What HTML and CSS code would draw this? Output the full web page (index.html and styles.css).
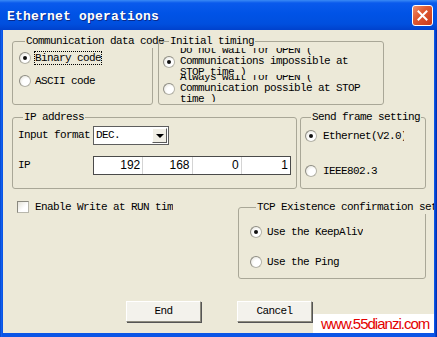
FILE: index.html
```html
<!DOCTYPE html>
<html>
    <head>
        <title>Ethernet operations</title>
        <link rel="stylesheet" href="styles.css">
    </head>
    <body>
        <div class="window">
            <div class="titlebar">
                <span class="title">Ethernet operations</span>
                <span class="close">
                    <svg width="11" height="11" viewBox="0 0 11 11"><path d="M1.5 1.5 L9.5 9.5 M9.5 1.5 L1.5 9.5" stroke="#fff" stroke-width="2" stroke-linecap="square"/></svg>
                </span>
            </div>
            <div class="client">
                <div class="row row-top">
                    <div class="group g-code">
                        <div class="legend">Communication data code</div>
                        <div class="opt opt-binary"><span class="radio on"></span><span class="focus">Binary code</span></div>
                        <div class="opt opt-ascii"><span class="radio"></span><span>ASCII code</span></div>
                    </div>
                    <div class="group g-timing">
                        <div class="legend">Initial timing</div>
                        <div class="opt tall"><span class="radio on"></span><span class="wrap">Do not wait for OPEN (<br>Communications impossible at<br>STOP time )</span></div>
                        <div class="opt tall"><span class="radio"></span><span class="wrap">Always wait for OPEN (<br>Communication possible at STOP<br>time )</span></div>
                    </div>
                </div>
                <div class="row row-mid">
                    <div class="group g-ip">
                        <div class="legend">IP address</div>
                        <div class="field-row fmt-row">
                            <span class="field-label">Input format</span>
                            <div class="select">
                                <span>DEC.</span>
                                <span class="arrow"><span class="tri"></span></span>
                            </div>
                        </div>
                        <div class="field-row ip-row">
                            <span class="field-label">IP</span>
                            <div class="ipbox">
                                <span class="seg">192</span>
                                <span class="seg">168</span>
                                <span class="seg">0</span>
                                <span class="seg">1</span>
                            </div>
                        </div>
                    </div>
                    <div class="group g-send">
                        <div class="legend">Send frame setting</div>
                        <div class="opt opt-eth"><span class="radio on"></span><span class="clip eth">Ethernet(V2.0)</span></div>
                        <div class="opt opt-ieee"><span class="radio"></span><span>IEEE802.3</span></div>
                    </div>
                </div>
                <div class="row row-low">
                    <div class="check-col">
                        <div class="opt opt-check"><span class="checkbox"></span><span class="clip runtime">Enable Write at RUN time</span></div>
                    </div>
                    <div class="group g-tcp">
                        <div class="legend">TCP Existence confirmation setting</div>
                        <div class="opt opt-keep"><span class="radio on"></span><span class="clip keep">Use the KeepAlive</span></div>
                        <div class="opt opt-ping"><span class="radio"></span><span>Use the Ping</span></div>
                    </div>
                </div>
                <div class="row row-btn">
                    <div class="btn">End</div>
                    <div class="btn">Cancel</div>
                </div>
            </div>
            <div class="watermark">www.55dianzi.com</div>
        </div>
    </body>
</html>
```

FILE: styles.css
```css
body {
    margin: 0;
    background: #fff;
}

.window {
    position: relative;
    width: 437px;
    height: 337px;
    display: flex;
    flex-direction: column;
    overflow: hidden;
    background: linear-gradient(90deg, #0031b5 0, #166af5 1px, #0a55e6 2px, #0a55e6 435px, #0031b5 436px);
    font-family: "Liberation Mono", "DejaVu Sans Mono", monospace;
    font-size: 11px;
    letter-spacing: -0.6px;
    line-height: 13px;
    color: #000;
}

/* title bar */
.titlebar {
    height: 30px;
    flex: none;
    display: flex;
    align-items: center;
    justify-content: space-between;
    padding: 0 4px 0 7px;
    background: linear-gradient(#3a8af5 0, #0a5aec 3px, #0053e6 45%, #004fde 80%, #0041cc 100%);
}
.title {
    padding-top: 2px;
    color: #fff;
    font-weight: bold;
    font-size: 13px;
    letter-spacing: 0.2px;
    text-shadow: 1px 1px 0 #0a2a8a;
}
.close {
    width: 21px;
    height: 21px;
    box-sizing: border-box;
    border: 1px solid #fff;
    border-radius: 3px;
    background: linear-gradient(135deg, #f0906c 0, #df5a32 40%, #c9381a 100%);
    display: flex;
    align-items: center;
    justify-content: center;
}

/* client area */
.client {
    flex: 1;
    margin: 0 3px 4px 3px;
    padding: 11px 8px 0 9px;
    background: #ece9d8;
    overflow: hidden;
}
.row {
    display: flex;
}
.row-top { gap: 5px; }
.row-mid { gap: 3px; margin-top: 12px; }
.row-low { margin-top: 11px; }
.row-btn {
    margin-top: 22px;
    justify-content: center;
    gap: 36px;
}

/* group boxes */
.group {
    box-sizing: border-box;
    border: 1px solid #a9a797;
    border-radius: 3px;
    flex: none;
}
.legend {
    width: max-content;
    margin: -7px 0 0 6px;
    padding: 0 1px;
    background: #ece9d8;
    white-space: nowrap;
}
.g-code { width: 141px; height: 64px; padding-left: 6px; }
.g-timing { width: 226px; height: 64px; padding-left: 4px; }
.g-ip { width: 285px; height: 72px; padding-left: 4px; }
.g-send { width: 126px; height: 72px; padding-left: 4px; }
.g-tcp { width: 188px; height: 72px; padding-left: 11px; margin-top: 7px; }

/* options */
.opt {
    display: flex;
    align-items: center;
    height: 16px;
    gap: 3px;
    white-space: nowrap;
}
.opt-binary { margin-top: 2px; }
.opt-ascii { margin-top: 7px; gap: 4px; }
.g-timing .opt { gap: 5px; }
.opt.tall {
    height: 27px;
    overflow: hidden;
}
.wrap {
    width: 200px;
    line-height: 11px;
    flex: none;
}
.opt-eth { margin-top: 4px; gap: 6px; }
.opt-ieee { margin-top: 19px; gap: 6px; }
.opt-keep { margin-top: 10px; gap: 5px; }
.opt-ping { margin-top: 14px; gap: 5px; }
.opt-check { margin-left: 5px; height: 14px; gap: 6px; }

.check-col { width: 226px; flex: none; }

.focus {
    border: 1px dotted #000;
    padding: 0;
    line-height: 12px;
}
.clip { overflow: hidden; }
.eth { width: 81px; }
.keep { width: 96px; }
.runtime { width: 138px; }

.radio {
    width: 12px;
    height: 12px;
    box-sizing: border-box;
    border-radius: 50%;
    border: 1px solid #b4b3a8;
    border-left-color: #8e8d84;
    border-top-color: #8e8d84;
    background: radial-gradient(circle at 65% 65%, #fff 40%, #dedcd2 100%);
    display: flex;
    align-items: center;
    justify-content: center;
    flex: none;
}
.radio.on::after {
    content: "";
    width: 4px;
    height: 4px;
    border-radius: 50%;
    background: #111;
}
.checkbox {
    width: 12px;
    height: 12px;
    box-sizing: border-box;
    border: 1px solid #b8b7ac;
    border-left-color: #8a897f;
    border-top-color: #8a897f;
    background: linear-gradient(135deg, #e4e2d8 0, #fff 60%);
    flex: none;
}

/* IP address fields */
.field-row {
    display: flex;
    align-items: center;
    height: 19px;
}
.fmt-row { margin-top: 2px; }
.ip-row { margin-top: 11px; }
.field-label { width: 75px; flex: none; padding-left: 1px; }
.select {
    width: 76px;
    height: 19px;
    box-sizing: border-box;
    border: 1px solid #5e5e5e;
    background: #fff;
    display: flex;
    align-items: center;
    padding-left: 2px;
}
.arrow {
    margin-left: auto;
    margin-right: 1px;
    width: 15px;
    height: 15px;
    box-sizing: border-box;
    border: 1px solid;
    border-color: #fff #5a5a5a #5a5a5a #fff;
    background: #f1efe6;
    display: flex;
    align-items: center;
    justify-content: center;
}
.tri {
    width: 0;
    height: 0;
    border-left: 4px solid transparent;
    border-right: 4px solid transparent;
    border-top: 4px solid #000;
}
.ipbox {
    width: 198px;
    height: 19px;
    box-sizing: border-box;
    border: 1px solid #4a4a4a;
    background: #fff;
    display: flex;
}
.seg {
    flex: 1;
    text-align: right;
    padding-right: 2px;
    border-right: 1px solid #d4d4d4;
    font-family: "Liberation Sans", Arial, sans-serif;
    font-size: 12px;
    letter-spacing: 0;
    line-height: 17px;
}
.seg:last-child { border-right: none; }

/* buttons */
.btn {
    width: 75px;
    height: 21px;
    box-sizing: border-box;
    border: 1px solid;
    border-color: #fff #8d8b7e #8d8b7e #fff;
    box-shadow: 1px 1px 0 #555;
    background: #f3f2ec;
    display: flex;
    align-items: center;
    justify-content: center;
}

/* watermark pasted over the corner */
.watermark {
    position: absolute;
    left: 313px;
    top: 314px;
    width: 121px;
    height: 19px;
    box-sizing: border-box;
    padding-left: 8px;
    background: #fff;
    color: #e40000;
    font-family: "Liberation Sans", Arial, sans-serif;
    font-size: 15px;
    letter-spacing: -1px;
    line-height: 19px;
}
```
